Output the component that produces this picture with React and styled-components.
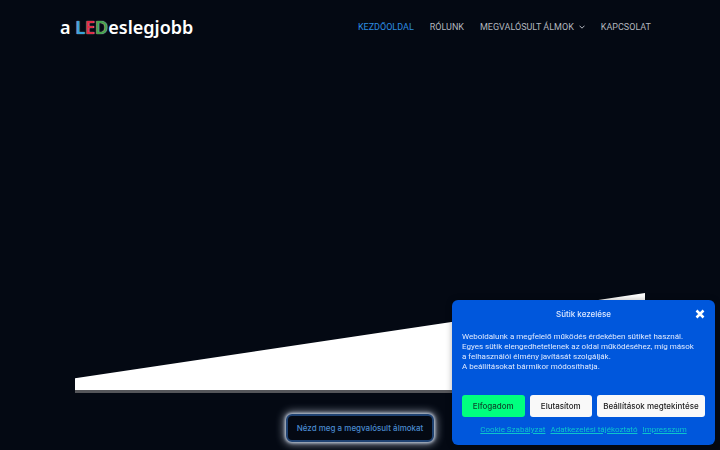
import React from "react";
import styled, { createGlobalStyle } from "styled-components";

const colors = {
  background: "#040913",
  navText: "#b2b6be",
  navActive: "#2d8ce0",
  banner: "#0057dc",
  bannerText: "#dfeaff",
  bannerLink: "#0cc4cc",
  accept: "#00ff7f",
};

const navItems = [
  { label: "KEZDŐOLDAL", active: true },
  { label: "RÓLUNK" },
  { label: "MEGVALÓSULT ÁLMOK", hasMenu: true },
  { label: "KAPCSOLAT" },
];

const policies = ["Cookie Szabályzat", "Adatkezelési tájékoztató", "Impresszum"];

const App = () => {
  return (
    <Page>
      <GlobalStyle />
      <Header>
        <Logo href="#">
          a <Led $color="#35a3dc">L</Led>
          <Led $color="#e02f44">E</Led>
          <Led $color="#46a34c">D</Led>eslegjobb
        </Logo>
        <Nav>
          {navItems.map((item) => (
            <NavLink key={item.label} href="#" $active={item.active}>
              {item.label}
              {item.hasMenu && (
                <Chevron viewBox="0 0 6 6" aria-hidden="true">
                  <path d="M0.5 1.7 3 4.2 5.5 1.7" />
                </Chevron>
              )}
            </NavLink>
          ))}
        </Nav>
      </Header>
      <Hero>
        <Slope />
        <Divider />
        <HeroButton type="button">Nézd meg a megvalósult álmokat</HeroButton>
      </Hero>
      <Banner role="dialog" aria-labelledby="cookie-title">
        <BannerHeader>
          <BannerTitle id="cookie-title">Sütik kezelése</BannerTitle>
          <CloseButton type="button" aria-label="Bezárás">
            <CloseIcon viewBox="0 0 8 8" aria-hidden="true">
              <path d="M1.2 1.2 6.8 6.8M6.8 1.2 1.2 6.8" />
            </CloseIcon>
          </CloseButton>
        </BannerHeader>
        <BannerText>
          Weboldalunk a megfelelő működés érdekében sütiket használ.
          <br />
          Egyes sütik elengedhetetlenek az oldal működéséhez, míg mások
          <br />
          a felhasználói élmény javítását szolgálják.
          <br />A beállításokat bármikor módosíthatja.
        </BannerText>
        <Actions>
          <ActionButton type="button" $accept>
            Elfogadom
          </ActionButton>
          <ActionButton type="button">Elutasítom</ActionButton>
          <ActionButton type="button" $wide>
            Beállítások megtekintése
          </ActionButton>
        </Actions>
        <Policies>
          {policies.map((policy) => (
            <PolicyLink key={policy} href="#">
              {policy}
            </PolicyLink>
          ))}
        </Policies>
      </Banner>
    </Page>
  );
};

const GlobalStyle = createGlobalStyle`
  * {
    box-sizing: border-box;
  }
  body {
    margin: 0;
    background: ${colors.background};
    font-family: Inter, "Open Sans", sans-serif;
  }
  button {
    font-family: inherit;
    cursor: pointer;
  }
`;

const Page = styled.div`
  min-height: 100vh;
  display: flex;
  flex-direction: column;
  background: ${colors.background};
  overflow: hidden;
`;

const Header = styled.header`
  display: flex;
  align-items: center;
  justify-content: space-between;
  padding: 14px 69px 14px 60px;
`;

const Logo = styled.a`
  font-family: "Noto Sans", sans-serif;
  font-weight: 600;
  font-size: 18px;
  line-height: 26px;
  color: #ffffff;
  text-decoration: none;
  white-space: nowrap;
`;

const Led = styled.span`
  color: ${(props) => props.$color};
  text-shadow: 0 0 1px #ffffff;
`;

const Nav = styled.nav`
  display: flex;
  align-items: center;
  gap: 16px;
`;

const NavLink = styled.a`
  display: flex;
  align-items: center;
  gap: 5px;
  font-family: Roboto, sans-serif;
  font-weight: 400;
  font-size: 9px;
  line-height: 14px;
  color: ${(props) => (props.$active ? colors.navActive : colors.navText)};
  text-decoration: none;
  white-space: nowrap;
`;

const Chevron = styled.svg`
  width: 6px;
  height: 6px;
  fill: none;
  stroke: currentColor;
  stroke-width: 1;
`;

const Hero = styled.main`
  flex: 1;
  display: flex;
  flex-direction: column;
  align-items: center;
  justify-content: flex-end;
  padding: 0 75px 8px;
`;

const Slope = styled.div`
  width: 100%;
  height: 97px;
  background: #ffffff;
  clip-path: polygon(0 88%, 100% 0, 100% 100%, 0 100%);
`;

const Divider = styled.div`
  width: 100%;
  height: 3px;
  margin-bottom: 21px;
  background: #55565a;
`;

const HeroButton = styled.button`
  height: 28px;
  padding: 0 9px;
  border: 2px solid #1f4272;
  border-radius: 6px;
  background: ${colors.background};
  box-shadow: 0 0 3px 1px #b9c4d6, 0 0 8px 2px #8d95a3;
  font-weight: 500;
  font-size: 8px;
  line-height: 12px;
  color: #4a8bd0;
  white-space: nowrap;
`;

const Banner = styled.section`
  position: fixed;
  right: 5px;
  bottom: 5px;
  width: 263px;
  max-width: calc(100vw - 10px);
  padding: 8px 10px 9px;
  border-radius: 6px;
  background: ${colors.banner};
  box-shadow: 0 0 6px rgba(0, 0, 0, 0.3);
`;

const BannerHeader = styled.div`
  display: grid;
  grid-template-columns: 10px 1fr 10px;
  align-items: center;
`;

const BannerTitle = styled.h2`
  grid-column: 2;
  margin: 0;
  font-weight: 500;
  font-size: 8px;
  line-height: 12px;
  text-align: center;
  color: ${colors.bannerText};
`;

const CloseButton = styled.button`
  display: flex;
  padding: 0;
  border: 0;
  background: none;
  color: #ffffff;
`;

const CloseIcon = styled.svg`
  width: 10px;
  height: 10px;
  fill: none;
  stroke: currentColor;
  stroke-width: 2;
`;

const BannerText = styled.p`
  margin: 12px 0 23px;
  font-family: Roboto, sans-serif;
  font-size: 8px;
  line-height: 10px;
  color: ${colors.bannerText};
`;

const Actions = styled.div`
  display: flex;
  gap: 5px;
`;

const ActionButton = styled.button`
  flex: ${(props) => (props.$wide ? "0 0 108px" : "1 1 0")};
  height: 22px;
  padding: 0;
  border: 0;
  border-radius: 3px;
  background: ${(props) => (props.$accept ? colors.accept : "#f9f9f9")};
  font-weight: 500;
  font-size: 8px;
  line-height: 12px;
  color: ${(props) => (props.$accept ? "#0b4a2c" : "#222222")};
  white-space: nowrap;
`;

const Policies = styled.div`
  display: flex;
  justify-content: center;
  gap: 5px;
  margin-top: 7px;
`;

const PolicyLink = styled.a`
  font-family: Roboto, sans-serif;
  font-size: 8px;
  line-height: 12px;
  color: ${colors.bannerLink};
  white-space: nowrap;
`;

export default App;
